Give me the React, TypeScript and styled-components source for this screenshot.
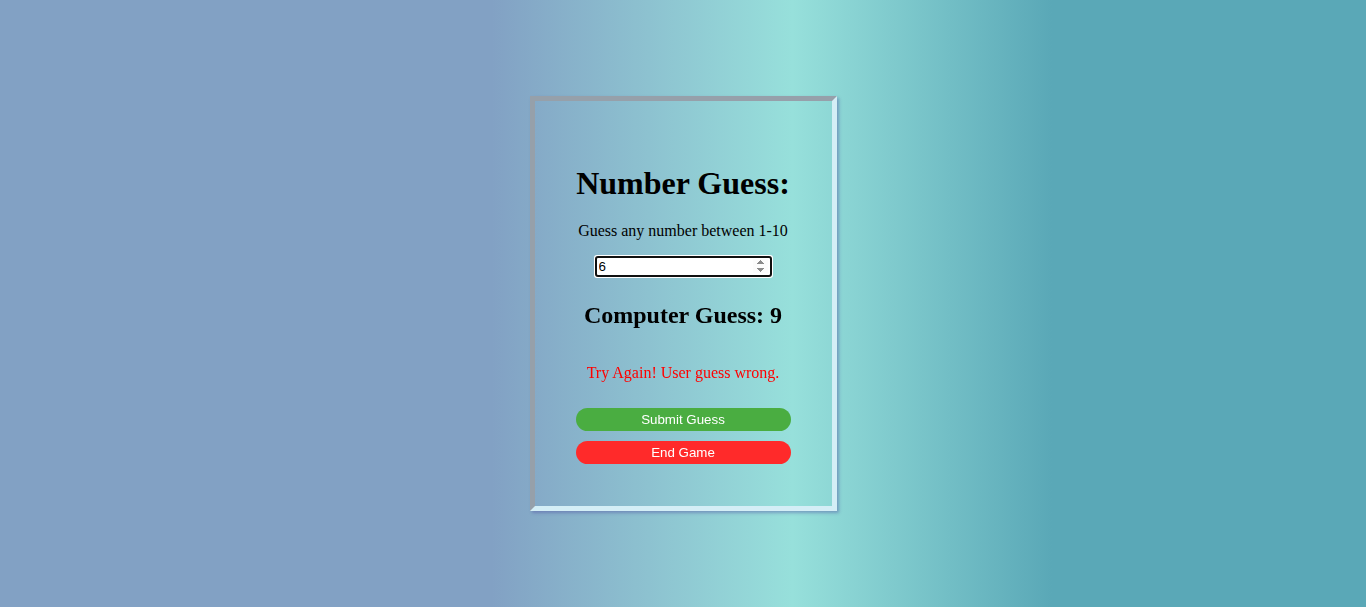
import React, { useState } from "react";
import styled, { createGlobalStyle } from "styled-components";

const GlobalStyle = createGlobalStyle`
  html, body {
    margin: 0;
    padding: 0;
  }
  body {
    min-height: 100vh;
    background: linear-gradient(90deg, #82a1c4 36%, #97e0db 58%, #5aa8b7 77%);
    font-family: "Liberation Serif", "Times New Roman", serif;
  }
`;

const Page = styled.main`
  min-height: 100vh;
  display: flex;
  align-items: center;
  justify-content: center;
`;

const Card = styled.section`
  width: 215px;
  padding: 64px 41px 42px 41px;
  border-style: solid;
  border-width: 5px;
  border-color: #96a0aa #d4eef6 #d4eef6 #96a0aa;
  box-shadow: 2px 2px 3px rgba(80, 80, 160, 0.45);
  display: flex;
  flex-direction: column;
  align-items: center;
  text-align: center;
`;

const Title = styled.h1`
  margin: 0;
  font-size: 32px;
  line-height: 37px;
  font-weight: bold;
  color: #000;
  white-space: nowrap;
`;

const Text = styled.p<{ $gap: number; $tone?: string }>`
  margin: ${(p) => p.$gap}px 0 0 0;
  font-size: 16px;
  line-height: 18px;
  color: ${(p) => p.$tone ?? "#000"};
  white-space: nowrap;
`;

const NumberInput = styled.input`
  margin-top: 16px;
  width: 177px;
  box-sizing: border-box;
  font-family: "Liberation Sans", Arial, sans-serif;
  font-size: 13.33px;
`;

const Subtitle = styled.h2`
  margin: 24px 0 0 0;
  font-size: 24px;
  line-height: 28px;
  font-weight: bold;
  white-space: nowrap;
`;

const ActionButton = styled.button<{ $bg: string; $gap: number }>`
  margin-top: ${(p) => p.$gap}px;
  width: 100%;
  height: 23px;
  border: none;
  border-radius: 12px;
  background: ${(p) => p.$bg};
  color: #fff;
  font-family: "Liberation Sans", Arial, sans-serif;
  font-size: 13.33px;
  padding: 0;
  cursor: pointer;
`;

export default function App() {
  const [value, setValue] = useState("6");
  return (
    <>
      <GlobalStyle />
      <Page>
        <Card>
          <Title>Number Guess:</Title>
          <Text $gap={20}>Guess any number between 1-10</Text>
          <NumberInput
            type="number"
            autoFocus
            value={value}
            onChange={(e) => setValue(e.target.value)}
          />
          <Subtitle>Computer Guess: 9</Subtitle>
          <Text $gap={35} $tone="#ff0000">
            Try Again! User guess wrong.
          </Text>
          <ActionButton $bg="#4aad41" $gap={26}>
            Submit Guess
          </ActionButton>
          <ActionButton $bg="#ff2a2a" $gap={10}>
            End Game
          </ActionButton>
        </Card>
      </Page>
    </>
  );
}
